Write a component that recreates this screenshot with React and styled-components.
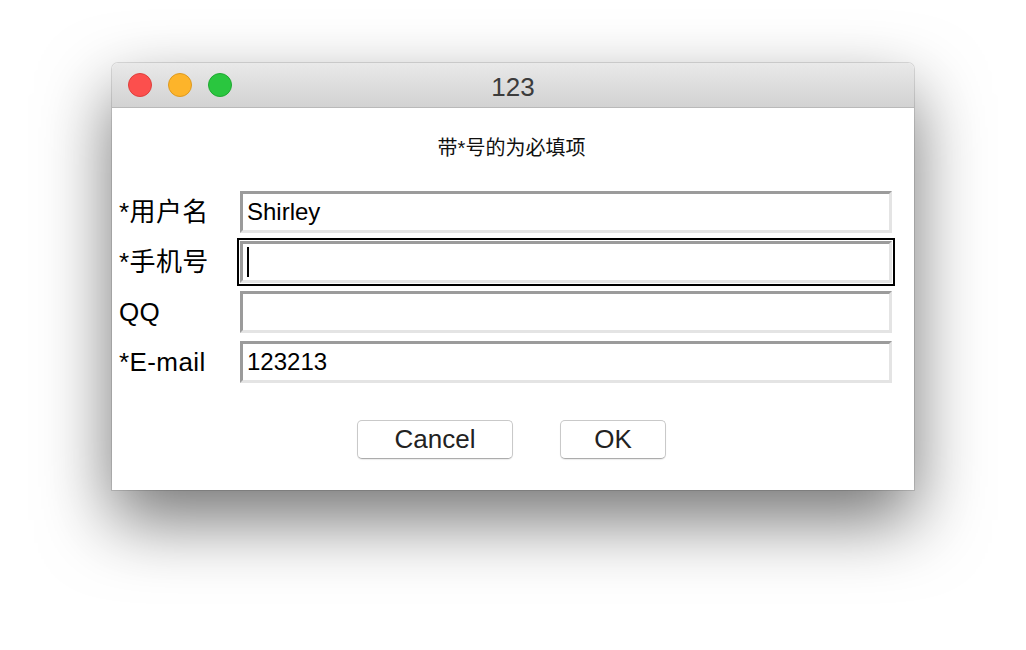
import React from "react";
import styled, { createGlobalStyle } from "styled-components";

const GlobalStyle = createGlobalStyle`
  html, body {
    margin: 0;
    padding: 0;
    background: #ffffff;
  }
  body {
    font-family: "Liberation Sans", "Noto Sans CJK SC", sans-serif;
  }
`;

const Page = styled.div`
  padding: 63px 0 0 112px;
  height: 650px;
  box-sizing: border-box;
`;

const Window = styled.div`
  width: 802px;
  background: #ffffff;
  border-radius: 6px 6px 0 0;
  box-shadow: 0 30px 70px rgba(0, 0, 0, 0.55), 0 0 0 1px rgba(0, 0, 0, 0.12);
`;

const TitleBar = styled.div`
  height: 44px;
  border-bottom: 1px solid #b9b9b9;
  border-radius: 6px 6px 0 0;
  background: linear-gradient(#e9e9e9, #d2d2d2);
  display: grid;
  grid-template-columns: 1fr auto 1fr;
  align-items: center;
`;

const Lights = styled.div`
  display: flex;
  gap: 16px;
  padding-left: 16px;
`;

const Light = styled.span`
  width: 24px;
  height: 24px;
  border-radius: 50%;
  box-sizing: border-box;
  background: ${(p) => p.$fill};
  border: 1px solid ${(p) => p.$edge};
`;

const Title = styled.div`
  font-size: 26px;
  color: #3c3c3c;
  line-height: 28px;
  padding-top: 4px;
`;

const Content = styled.div`
  padding: 28px 22px 31px 7px;
  display: flex;
  flex-direction: column;
`;

const Subtitle = styled.div`
  text-align: center;
  font-size: 20px;
  line-height: 24px;
  color: #111;
  padding-left: 12px;
`;

const Form = styled.div`
  margin-top: 31px;
  display: grid;
  grid-template-columns: 121px 1fr;
  grid-auto-rows: 42px;
  row-gap: 8px;
  align-items: center;
`;

const Label = styled.div`
  font-size: 26px;
  letter-spacing: 0.4px;
  color: #000;
  line-height: 42px;
`;

const Field = styled.div`
  height: 42px;
  box-sizing: border-box;
  border-style: solid;
  border-width: 3px;
  border-color: #9b9b9b #e4e4e4 #e4e4e4 #9b9b9b;
  background: #fff;
  font-size: 24px;
  color: #000;
  padding-left: 4px;
  display: flex;
  align-items: center;
  box-shadow: ${(p) => (p.$focused ? "0 0 0 1px #fff, 0 0 0 3px #000" : "none")};
`;

const Caret = styled.span`
  width: 2px;
  height: 30px;
  background: #000;
`;

const Buttons = styled.div`
  margin-top: 37px;
  display: flex;
  justify-content: center;
  gap: 47px;
  padding-left: 12px;
`;

const Button = styled.button`
  width: ${(p) => p.$w}px;
  height: 39px;
  box-sizing: border-box;
  background: #fff;
  border: 1px solid #c9c9c9;
  border-bottom-color: #acacac;
  border-radius: 5px;
  box-shadow: 0 1px 1px rgba(0, 0, 0, 0.08);
  font-family: "Liberation Sans", sans-serif;
  font-size: 26px;
  color: #222;
  padding: 0;
`;

const rows = [
  { label: "*用户名", value: "Shirley" },
  { label: "*手机号", value: "", focused: true },
  { label: "QQ", value: "" },
  { label: "*E-mail", value: "123213" },
];

export default function App() {
  return (
    <>
      <GlobalStyle />
      <Page>
        <Window>
          <TitleBar>
            <Lights>
              <Light $fill="#fc4f4d" $edge="#de3f3c" />
              <Light $fill="#fdb42a" $edge="#de9a1f" />
              <Light $fill="#2ac63f" $edge="#1fa931" />
            </Lights>
            <Title>123</Title>
            <div />
          </TitleBar>
          <Content>
            <Subtitle>带*号的为必填项</Subtitle>
            <Form>
              {rows.map((r) => (
                <React.Fragment key={r.label}>
                  <Label>{r.label}</Label>
                  <Field $focused={r.focused}>
                    {r.focused ? <Caret /> : r.value}
                  </Field>
                </React.Fragment>
              ))}
            </Form>
            <Buttons>
              <Button $w={156}>Cancel</Button>
              <Button $w={106}>OK</Button>
            </Buttons>
          </Content>
        </Window>
      </Page>
    </>
  );
}
